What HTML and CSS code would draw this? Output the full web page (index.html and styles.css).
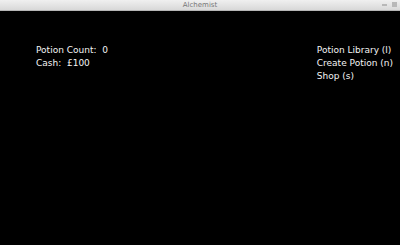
FILE: index.html
```html
<!DOCTYPE html>
<html lang="en">

<head>
    <meta charset="UTF-8">
    <meta name="viewport" content="width=device-width, initial-scale=1.0">
    <title>Alchemist</title>
    <link rel="stylesheet" href="styles.css">
</head>

<body>
    <div class="titlebar">
        <span class="title">Alchemist</span>
        <div class="controls">
            <span class="btn-min"></span>
            <span class="btn-close"></span>
        </div>
    </div>
    <div class="screen">
        <div class="stats">
            <div>Potion Count:&nbsp; 0</div>
            <div>Cash:&nbsp; £100</div>
        </div>
        <div class="menu">
            <div>Potion Library (l)</div>
            <div>Create Potion (n)</div>
            <div>Shop (s)</div>
        </div>
    </div>
</body>

</html>
```

FILE: styles.css
```css
html, body {
    margin: 0;
    height: 100%;
    background: #000;
}

body {
    display: flex;
    flex-direction: column;
    font-family: "DejaVu Sans", sans-serif;
}

.titlebar {
    height: 10px;
    background: linear-gradient(#f0f0f0, #d8d8d8);
    border-bottom: 1px solid #b5b5b5;
    display: flex;
    align-items: center;
    justify-content: center;
    position: relative;
}

.title {
    font-size: 7px;
    color: #777;
}

.controls {
    position: absolute;
    right: 3px;
    top: 2px;
    display: flex;
    gap: 5px;
}

.btn-min,
.btn-close {
    width: 5px;
    height: 5px;
    background: #b8b8b8;
}

.btn-min {
    height: 2px;
    margin-top: 2px;
}

.screen {
    flex: 1;
    display: flex;
    justify-content: space-between;
    padding: 33px 7px 0 36px;
    color: #f4f4f4;
    font-size: 9px;
    line-height: 13px;
}
```
